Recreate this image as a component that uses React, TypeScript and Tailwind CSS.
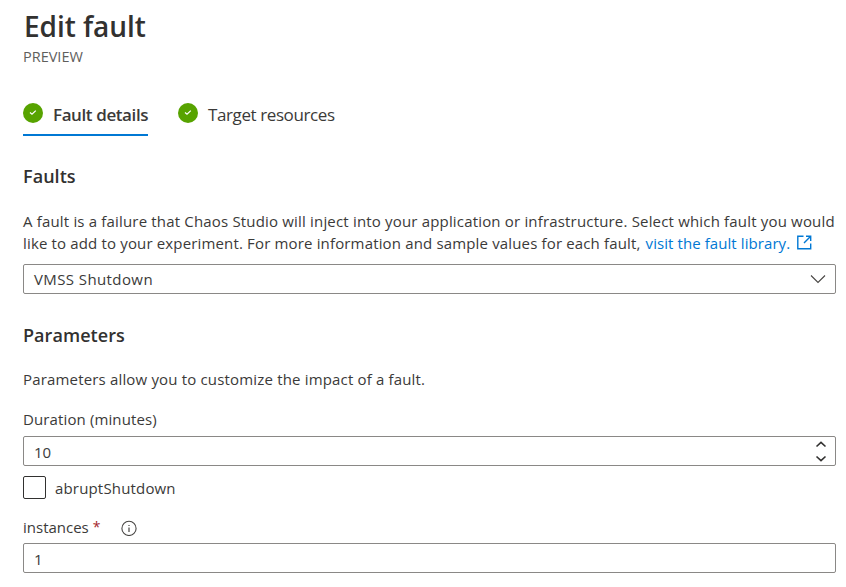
import React from "react";

function CheckBadge() {
  return (
    <svg width="20" height="20" viewBox="0 0 20 20" className="block shrink-0">
      <circle cx="10" cy="10" r="10" fill="#57a300" />
      <path d="M7 9.5 9 11.3 12.8 7.6" fill="none" stroke="#fff" strokeWidth="1.2" />
    </svg>
  );
}

export default function App() {
  return (
    <main className="h-[587px] w-[846px] overflow-hidden bg-white pl-[23px] pr-[10px] font-['Open_Sans','Noto_Sans',sans-serif] text-[15px] leading-[22px] whitespace-nowrap text-[#3b3a39]">
      <header className="flex h-[103px] flex-col">
        <h1 className="mt-[8px] ml-px h-[36px] text-[28px] leading-[36px] font-semibold tracking-[-0.05px] text-[#323130]">Edit fault</h1>
        <p className="mt-[3px] text-[14.5px] leading-[20px] text-[#605e5c]">PREVIEW</p>
      </header>

      <nav className="flex h-[33px] gap-[30px] text-[17px] leading-[24px] tracking-[-0.4px]">
        <div className="flex w-[125px] gap-[10px] border-b-2 border-[#0078d4]">
          <CheckBadge />
          <span className="font-semibold">Fault details</span>
        </div>
        <div className="flex gap-[10px]">
          <CheckBadge />
          <span>Target resources</span>
        </div>
      </nav>

      <section>
        <h2 className="mt-[28px] text-[18px] leading-[24px] font-semibold tracking-[0.05px] text-[#323130]">Faults</h2>
        <div className="mt-[22px] h-[44px]">
          <p className="tracking-[0.175px]">A fault is a failure that Chaos Studio will inject into your application or infrastructure. Select which fault you would</p>
          <p className="flex">
            <span className="tracking-[0.155px]">like to add to your experiment. For more information and sample values for each fault,</span>
            <a className="ml-[5px] flex text-[#0078d4]">
              <span className="tracking-[0.08px]">visit the fault library.</span>
              <svg width="15" height="15" viewBox="0 0 15 15" className="ml-[7px] mt-[3px]" fill="none" stroke="#0078d4" strokeWidth="1.4">
                <path d="M6.5 1.3H.8V13.7H13.7V8.5M9 1.3H13.7V6M13.7 1.3 7 8" />
              </svg>
            </a>
          </p>
        </div>
        <div className="mt-[10px] flex h-[30px] items-center justify-between rounded-[2px] border border-[#8a8886] pr-[9px] pl-[10px]">
          <span className="tracking-[0.4px]">VMSS Shutdown</span>
          <svg width="16" height="10" viewBox="0 0 16 10" fill="none" stroke="#484644" strokeWidth="1.1">
            <path d="M1 1.5 8 8.5 15 1.5" />
          </svg>
        </div>
      </section>

      <section>
        <h2 className="mt-[29px] text-[18px] leading-[24px] font-semibold tracking-[0.05px] text-[#323130]">Parameters</h2>
        <p className="mt-[21px] tracking-[0.17px]">Parameters allow you to customize the impact of a fault.</p>
        <p className="mt-[18px] tracking-[0.12px]">Duration (minutes)</p>
        <div className="mt-[6px] flex h-[30px] items-center justify-between rounded-[2px] border border-[#8a8886] pr-[8px] pl-[10px]">
          <span className="pt-px">10</span>
          <svg width="12" height="22" viewBox="0 0 12 22" fill="none" stroke="#323130" strokeWidth="1.6">
            <path d="M1.5 6.5 6 2.3 10.5 6.5M1.5 16.5 6 20.7 10.5 16.5" />
          </svg>
        </div>
        <div className="mt-[10px] flex h-[23px] gap-[9px]">
          <span className="size-[23px] rounded-[2px] border border-[#323130]" />
          <span className="pt-px tracking-[0.17px]">abruptShutdown</span>
        </div>
        <div className="mt-[17px] flex h-[22px]">
          <span>instances</span>
          <span className="ml-[4px] text-[14px] text-[#a4262c]">*</span>
          <svg width="16" height="16" viewBox="0 0 16 16" className="mt-[4px] ml-[20px]" fill="none" stroke="#484644">
            <circle cx="8" cy="8.4" r="7.1" strokeWidth="1.1" />
            <path d="M8 7.4v4.5M8 4.9v1.2" strokeWidth="1.2" />
          </svg>
        </div>
        <div className="mt-[5px] flex h-[30px] items-center rounded-[2px] border border-[#8a8886] pl-[10px]">
          <span className="pt-px">1</span>
        </div>
      </section>
    </main>
  );
}
